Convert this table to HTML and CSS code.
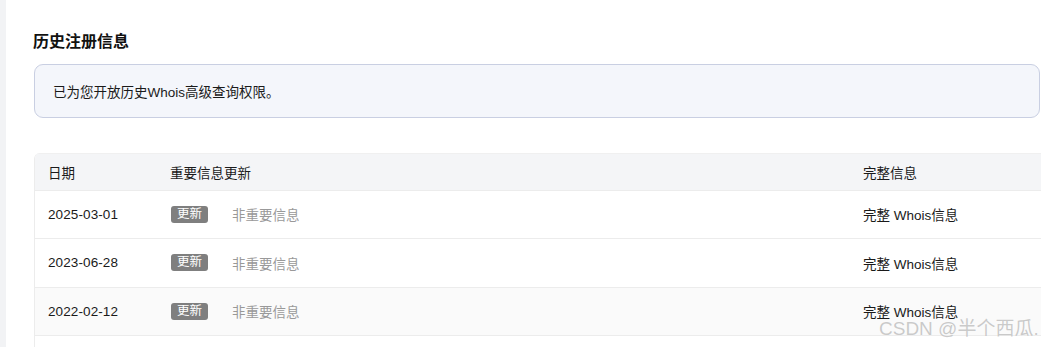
FILE: index.html
```html
<!DOCTYPE html>
<html lang="zh-CN">
<head>
<meta charset="utf-8">
<link rel="stylesheet" href="styles.css">
</head>
<body>
<div class="page">
  <div class="side-strip"></div>
  <main class="main">
    <h2 class="title">历史注册信息</h2>
    <div class="notice">已为您开放历史Whois高级查询权限。</div>
    <div class="table">
      <div class="row head">
        <div class="cell">日期</div>
        <div class="cell">重要信息更新</div>
        <div class="cell">完整信息</div>
      </div>
      <div class="row">
        <div class="cell date">2025-03-01</div>
        <div class="cell"><span class="badge">更新</span><span class="minor">非重要信息</span></div>
        <div class="cell">完整 Whois信息</div>
      </div>
      <div class="row">
        <div class="cell date">2023-06-28</div>
        <div class="cell"><span class="badge">更新</span><span class="minor">非重要信息</span></div>
        <div class="cell">完整 Whois信息</div>
      </div>
      <div class="row hover">
        <div class="cell date">2022-02-12</div>
        <div class="cell"><span class="badge">更新</span><span class="minor">非重要信息</span></div>
        <div class="cell">完整 Whois信息</div>
      </div>
      <div class="row"></div>
    </div>
  </main>
  <div class="watermark">CSDN @半个西瓜.</div>
</div>
</body>
</html>
```

FILE: styles.css
```css
* { box-sizing: border-box; }
html, body {
  margin: 0;
  padding: 0;
  background: #fff;
  overflow: hidden;
}
body {
  font-family: "Liberation Sans", "Noto Sans CJK SC", sans-serif;
  color: #1a1a1a;
  font-size: 13.5px;
}
.page {
  position: relative;
  display: flex;
  width: 1041px;
  height: 347px;
  overflow: hidden;
}
.side-strip {
  flex: 0 0 6px;
  background: #f2f3f5;
}
.main {
  flex: 1;
  padding: 30px 1px 0 28px;
  min-width: 0;
}
.title {
  margin: 0;
  font-size: 16px;
  line-height: 24px;
  font-weight: 700;
  color: #111;
  margin-left: -1px;
}
.notice {
  margin-top: 10px;
  height: 54px;
  display: flex;
  align-items: center;
  padding: 0 18px;
  background: #f4f6fb;
  border: 1px solid #c9cfe2;
  border-radius: 9px;
  font-size: 13.5px;
  color: #1a1a1a;
}
.table {
  margin-top: 35px;
  width: 1100px;
  border-left: 1px solid #ececec;
  border-top-left-radius: 6px;
  overflow: hidden;
}
.row {
  display: grid;
  grid-template-columns: 122px 693px 1fr;
  height: 48.5px;
  align-items: center;
  border-bottom: 1px solid #ececec;
}
.row.head {
  height: 37.5px;
  background: #f4f5f7;
  border-top: 1px solid #f0f0f0;
}
.row.hover { background: #fafafa; }
.cell {
  padding-left: 13px;
  display: flex;
  align-items: center;
  white-space: nowrap;
}
.date { letter-spacing: 0.1px; }
.badge {
  display: inline-block;
  width: 37px;
  height: 17px;
  line-height: 17px;
  margin-left: 1px;
  text-align: center;
  background: #7f7f7f;
  color: #fff;
  font-size: 12.5px;
  border-radius: 3px;
}
.minor {
  margin-left: 24px;
  color: #999;
}
.watermark {
  position: absolute;
  left: 879px;
  top: 317px;
  font-size: 19px;
  line-height: 24px;
  color: rgba(150, 150, 150, 0.5);
  white-space: nowrap;
  text-shadow: 0 0 1px rgba(255,255,255,0.8);
}
```
